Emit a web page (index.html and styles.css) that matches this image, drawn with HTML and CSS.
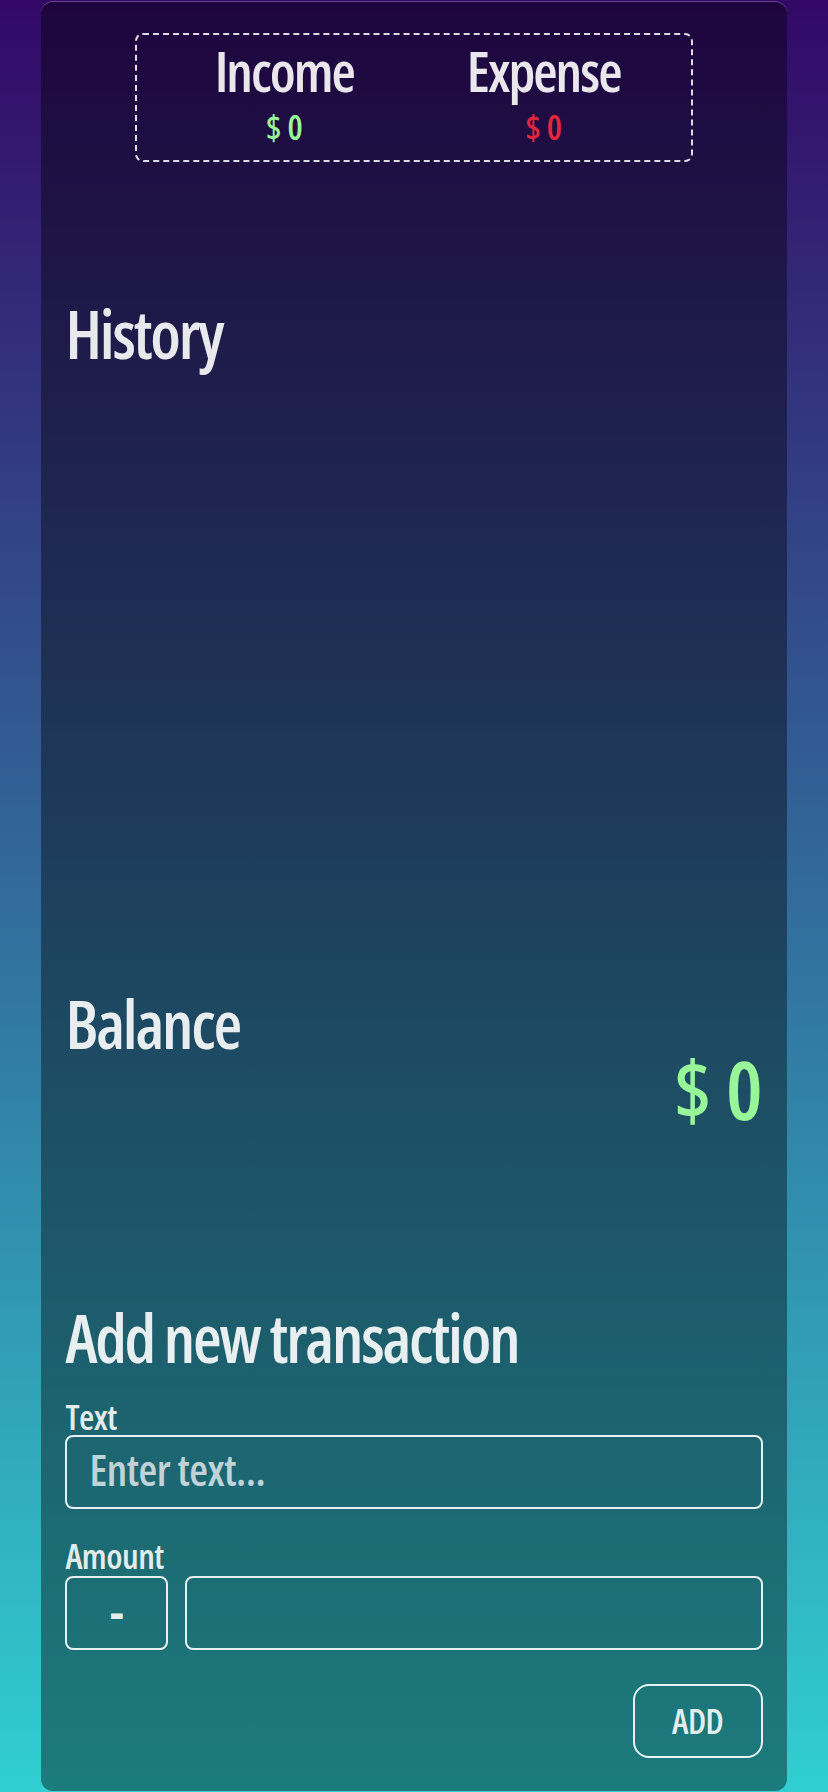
FILE: index.html
```html
<!DOCTYPE html>
<html lang="en">
<head>
<meta charset="utf-8">
<title>Expense Tracker</title>
<link rel="stylesheet" href="styles.css">
</head>
<body>
<main class="card">
  <section class="summary">
    <div class="summary-col">
      <h3 class="summary-label">Income</h3>
      <p class="money money-plus">$ 0</p>
    </div>
    <div class="summary-col">
      <h3 class="summary-label">Expense</h3>
      <p class="money money-minus">$ 0</p>
    </div>
  </section>

  <h2 class="section-title history-title">History</h2>
  <ul class="history-list"></ul>

  <h2 class="section-title">Balance</h2>
  <p class="balance">$ 0</p>

  <h2 class="section-title add-title">Add new transaction</h2>
  <form class="form">
    <div class="form-control">
      <label class="field-label" for="text">Text</label>
      <input class="field" id="text" type="text" placeholder="Enter text...">
    </div>
    <div class="form-control">
      <label class="field-label" for="amount">Amount</label>
      <div class="amount-row">
        <button type="button" class="sign-btn">-</button>
        <input class="field amount-field" id="amount" type="text">
      </div>
    </div>
    <div class="form-actions">
      <button type="button" class="add-btn">ADD</button>
    </div>
  </form>
</main>
</body>
</html>
```

FILE: styles.css
```css
html {
  min-height: 100%;
  background: linear-gradient(to bottom, #330867 0%, #30cfd0 100%);
}

body {
  margin: 0;
  font-family: "Open Sans", "Roboto", sans-serif;
  font-stretch: 75%;
  font-weight: 550;
  color: rgba(255, 255, 255, 0.9);
}

.card {
  width: 90%;
  box-sizing: border-box;
  margin: 2px auto 0;
  padding: 31px 24px 33px;
  border-radius: 12px;
  background: rgba(0, 0, 0, 0.4);
  box-shadow: 0 -1px 0 rgba(255, 255, 255, 0.25);
}

.summary {
  width: 80%;
  margin: 0 auto;
  box-sizing: border-box;
  border: 2px dashed rgba(255, 255, 255, 0.85);
  border-radius: 8px;
  padding: 7px 35px 16px;
  display: grid;
  grid-template-columns: 1fr 1fr;
  column-gap: 35px;
  text-align: center;
}

.summary-label {
  margin: 0;
  font-size: 56px;
  line-height: 56px;
  font-weight: 550;
  letter-spacing: -2px;
}

.money {
  margin: 12px 0 0;
  font-size: 34px;
  line-height: 34px;
}

.money-plus { color: #98f598; }
.money-minus { color: #e3263d; }

.section-title {
  margin: 0;
  font-size: 66px;
  line-height: 66px;
  font-weight: 550;
  letter-spacing: -2.2px;
}

.history-title { margin-top: 138px; }

.history-list {
  list-style: none;
  margin: 0;
  padding: 0;
  min-height: 624px;
}

.balance {
  margin: 0;
  text-align: right;
  font-size: 82px;
  line-height: 64px;
  color: #98f598;
}

.add-title { margin-top: 184px; }

.form { margin: 0; }

.form-control {
  margin-top: 29px;
  display: flex;
  flex-direction: column;
}

.field-label {
  font-size: 35px;
  line-height: 36px;
  letter-spacing: -0.5px;
}

.field {
  box-sizing: border-box;
  height: 74px;
  width: 100%;
  margin: 0;
  padding: 0 22px 6px;
  border: 2px solid rgba(255, 255, 255, 0.9);
  border-radius: 8px;
  background: transparent;
  font-family: inherit;
  font-stretch: inherit;
  font-weight: 550;
  font-size: 43px;
  letter-spacing: -0.5px;
  color: #fff;
  outline: none;
}

.field::placeholder {
  color: rgba(255, 255, 255, 0.72);
}

.amount-row {
  margin-top: 2px;
  display: flex;
  gap: 17px;
}

.sign-btn {
  box-sizing: border-box;
  flex: 0 0 103px;
  height: 74px;
  border: 2px solid rgba(255, 255, 255, 0.9);
  border-radius: 8px;
  background: transparent;
  color: rgba(255, 255, 255, 0.9);
  font-family: inherit;
  font-stretch: 100%;
  font-size: 44px;
  font-weight: 700;
  padding: 0 0 4px;
}

.amount-field { flex: 1 1 auto; }

.form-actions {
  margin-top: 34px;
  display: flex;
  justify-content: flex-end;
}

.add-btn {
  box-sizing: border-box;
  width: 130px;
  height: 74px;
  border: 2px solid rgba(255, 255, 255, 0.9);
  border-radius: 16px;
  background: transparent;
  color: rgba(255, 255, 255, 0.9);
  font-family: inherit;
  font-stretch: inherit;
  font-weight: 550;
  font-size: 34px;
  letter-spacing: -0.5px;
  padding: 0;
}
```
